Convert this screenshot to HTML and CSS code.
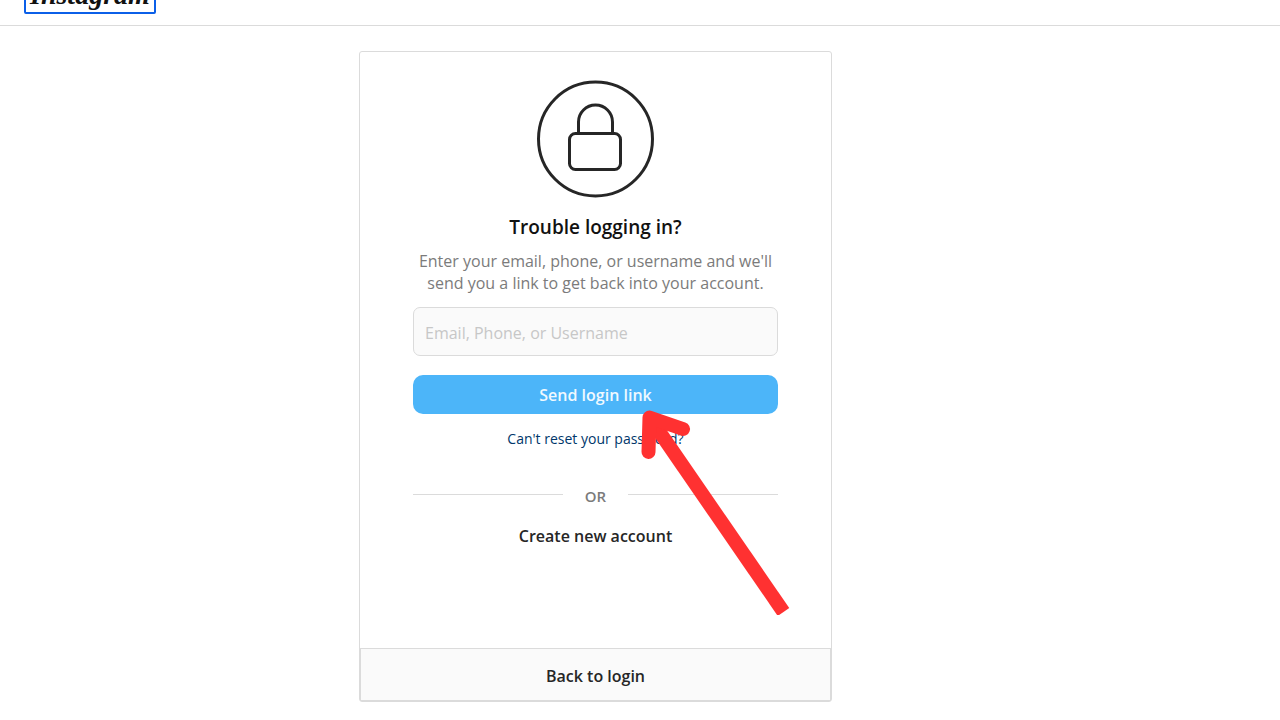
FILE: index.html
```
<!DOCTYPE html>
<html lang="en">
<head>
  <meta charset="UTF-8">
  <meta name="viewport" content="width=device-width, initial-scale=1">
  <title>Trouble logging in?</title>
  <link rel="stylesheet" href="styles.css">
</head>
<body>
  <header class="topbar">
    <a class="logo" href="#">Instagram</a>
  </header>

  <main class="page">
    <section class="card">
      <form class="card-body">
        <svg class="lock" viewBox="0 0 118 118" aria-hidden="true">
          <circle cx="58.5" cy="59" r="57"/>
          <rect x="32.5" y="53.5" width="51" height="36" rx="6"/>
          <path d="M41.5 53V42a17 17 0 0 1 34 0V53"/>
        </svg>
        <h1>Trouble logging in?</h1>
        <p class="hint">Enter your email, phone, or username and we'll send you a link to get back into your account.</p>
        <input class="field" type="text" placeholder="Email, Phone, or Username" aria-label="Email, Phone, or Username">
        <button class="send-btn" type="button">Send login link</button>
        <a class="reset-link" href="#">Can't reset your password?</a>
        <div class="divider"><span>OR</span></div>
        <a class="create-link" href="#">Create new account</a>
      </form>
      <a class="back-link" href="#">Back to login</a>

      <!-- pointer to the send button -->
      <svg class="arrow" viewBox="0 0 150 208" aria-hidden="true">
        <path class="shaft" d="M12 14L143.500 205"/>
        <path class="head" d="M8.500 45L9.500 10.500L43 22"/>
      </svg>
    </section>
  </main>
</body>
</html>
```

FILE: styles.css
```
* {
  box-sizing: border-box;
}

body {
  margin: 0;
  background: #fff;
  color: #262626;
  font-family: "Segoe UI", "Open Sans", sans-serif;
  font-size: 16px;
}

a {
  color: inherit;
  text-decoration: none;
}

.topbar {
  display: flex;
  align-items: flex-end;
  height: 26px;
  padding: 0 24px 11px;
  border-bottom: 1px solid #dbdbdb;
  overflow: hidden;
}

.logo {
  flex: none;
  padding: 0 4px;
  border: 2px solid #0b5fe8;
  border-radius: 2px;
  color: #111;
  font-family: "Liberation Serif", serif;
  font-size: 28px;
  font-style: italic;
  font-weight: bold;
  line-height: 34px;
}

.page {
  display: flex;
  justify-content: center;
  padding: 25px 89px 18px 0;
}

.card {
  position: relative;
  display: flex;
  flex-direction: column;
  width: 100%;
  max-width: 473px;
  border: 1px solid #dbdbdb;
  border-radius: 3px;
}

.card-body {
  display: flex;
  flex-direction: column;
  align-items: center;
  padding: 28px 53px 101px;
  text-align: center;
}

.lock {
  width: 118px;
  height: 118px;
  fill: none;
  stroke: #262626;
  stroke-width: 3;
}

h1 {
  margin: 16px 0 10px;
  color: #111;
  font-size: 19px;
  font-weight: 600;
  line-height: 26px;
}

.hint {
  margin: 0 0 13px;
  color: #7b7b7b;
  line-height: 22px;
}

.field {
  width: 100%;
  height: 49px;
  padding: 2px 11px 0;
  border: 1px solid #dbdbdb;
  border-radius: 7px;
  background: #fafafa;
  font: inherit;
}

.field::placeholder {
  color: #c7c7c7;
}

.send-btn {
  width: 100%;
  height: 39px;
  margin: 19px 0 14px;
  border: none;
  border-radius: 10px;
  background: #4cb5f9;
  color: #f0f9ff;
  font: inherit;
  font-weight: 600;
}

.reset-link {
  color: #00376b;
  font-size: 14px;
  line-height: 22px;
}

.divider {
  display: flex;
  align-items: center;
  align-self: stretch;
  gap: 22px;
  margin: 31px 0 18px;
  color: #7b7b7b;
  font-size: 15px;
  font-weight: 600;
  line-height: 22px;
}

/* the rules sit slightly above the middle of the word */
.divider span {
  padding-top: 4px;
}

.divider::before,
.divider::after {
  content: "";
  flex: 1;
  height: 1px;
  background: #dbdbdb;
}

.create-link,
.back-link {
  font-weight: 600;
  line-height: 22px;
}

.back-link {
  padding: 16px 0 13px;
  border: 1px solid #dbdbdb;
  background: #fafafa;
  text-align: center;
}

.arrow {
  position: absolute;
  top: 355px;
  left: 280px;
  width: 150px;
  height: 208px;
  fill: none;
  stroke: #ff3131;
  stroke-width: 14;
  pointer-events: none;
}

.head {
  stroke-linecap: round;
  stroke-linejoin: round;
}
```
